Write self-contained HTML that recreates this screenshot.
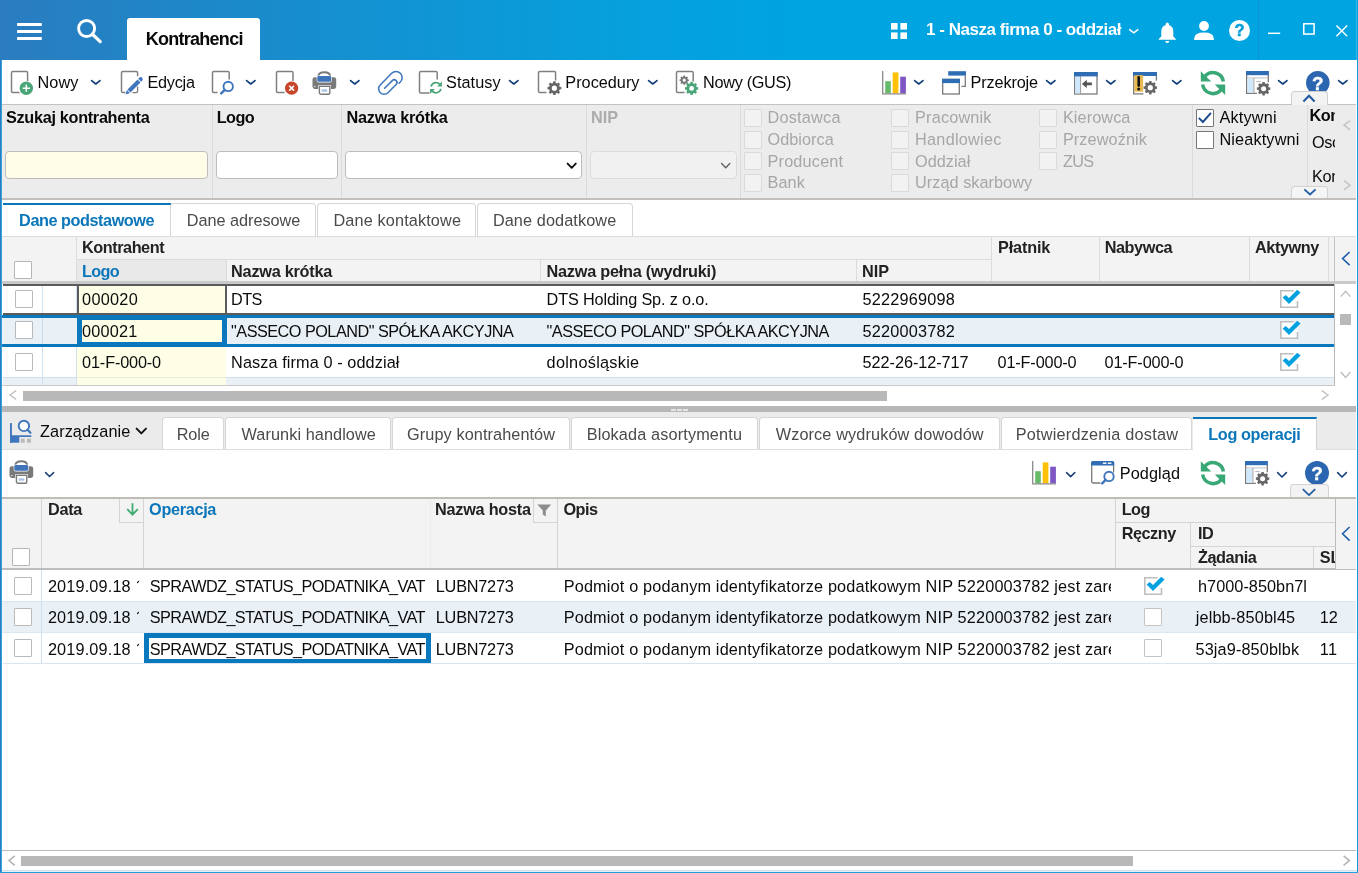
<!DOCTYPE html>
<html lang="pl"><head><meta charset="utf-8"><title>Kontrahenci</title>
<style>
html,body{margin:0;padding:0;}
body{width:1358px;height:873px;overflow:hidden;background:#fff;font-family:"Liberation Sans",sans-serif;position:relative;}
#r{position:absolute;left:0;top:0;width:1358px;height:873px;overflow:hidden;will-change:transform;}
#r div,#r span.t,#r svg{position:absolute;box-sizing:border-box;}
#r span.t{white-space:pre;}
#r svg{overflow:visible;}
</style></head>
<body><div id="r">
<div style="left:0px;top:0px;width:1358px;height:60px;background:linear-gradient(to right,#2a7cbf 0%,#1d88c9 15%,#1194d3 30%,#06a0dd 46%,#00a4e1 58%,#00a4e1 100%);"></div>
<div style="left:1258px;top:0px;width:1px;height:60px;background:#0a93cf;"></div>
<svg style="left:17px;top:22px" width="25" height="19" viewBox="0 0 25 19"><path d="M0.1 2.4 H24.75 M0.1 9.4 H24.75 M0.1 16.4 H24.75" stroke="#fff" stroke-width="3" fill="none"/></svg>
<svg style="left:76px;top:19px" width="27" height="26" viewBox="0 0 27 26"><circle cx="10.6" cy="9.5" r="8" fill="none" stroke="#fff" stroke-width="2.9"/><path d="M16.4 15.3 L24.2 22.6" stroke="#fff" stroke-width="3.3" stroke-linecap="round"/></svg>
<div style="left:127px;top:18px;width:133px;height:42px;background:#fff;border-radius:3px 3px 0 0;"></div>
<span id="t1" class="t" style="left:145.7px;top:29px;font-size:18px;line-height:20px;color:#0a0a0a;font-weight:bold;letter-spacing:-0.729px;">Kontrahenci</span>
<svg style="left:890.5px;top:23px" width="16" height="16" viewBox="0 0 16 16"><rect x="0" y="0" width="6.6" height="6.6" fill="#fff"/><rect x="9.4" y="0" width="6.6" height="6.6" fill="#fff"/><rect x="0" y="9.4" width="6.6" height="6.6" fill="#fff"/><rect x="9.4" y="9.4" width="6.6" height="6.6" fill="#fff"/></svg>
<span id="t2" class="t" style="left:926.1px;top:20px;font-size:17px;line-height:20px;color:#fff;font-weight:bold;letter-spacing:-0.476px;">1 - Nasza firma 0 - oddział</span>
<svg style="left:1126.5px;top:26.5px" width="13.5" height="8.5" viewBox="0 0 13.5 8.5"><path d="M2.6 2.6 L6.75 5.9 L10.9 2.6" fill="none" stroke="#fff" stroke-width="1.4" stroke-linecap="round" stroke-linejoin="round"/></svg>
<svg style="left:1158px;top:22px" width="19" height="22" viewBox="0 0 19 22"><path d="M9.3 0.6 Q10.9 0.6 10.9 2.2 V2.9 Q15.3 4.2 15.3 9.6 V14.4 L17.9 17 V17.8 H0.7 V17 L3.3 14.4 V9.6 Q3.3 4.2 7.7 2.9 V2.2 Q7.7 0.6 9.3 0.6Z" fill="#fff"/><path d="M7.3 19 H11.3 Q11.3 21 9.3 21 Q7.3 21 7.3 19Z" fill="#fff"/></svg>
<svg style="left:1193.5px;top:20.5px" width="20" height="19" viewBox="0 0 20 19"><circle cx="10" cy="5" r="4.9" fill="#fff"/><path d="M0.2 19 V17.4 Q0.6 11.5 10 11.5 Q19.4 11.5 19.8 17.4 V19Z" fill="#fff"/></svg>
<svg style="left:1229px;top:19.8px" width="21" height="21" viewBox="0 0 21 21"><circle cx="10.5" cy="10.5" r="10.5" fill="#fff"/><text x="10.5" y="16.4" text-anchor="middle" style="font:bold 16.5px 'Liberation Sans',sans-serif" fill="#069fdc" stroke="#069fdc" stroke-width="0.5">?</text></svg>
<svg style="left:1268px;top:31.5px" width="13" height="3" viewBox="0 0 13 3"><path d="M0 1.3 H12.2" stroke="#fff" stroke-width="1.5"/></svg>
<svg style="left:1303px;top:22.6px" width="12" height="12" viewBox="0 0 12 12"><rect x="0.75" y="0.75" width="10.3" height="10.3" fill="none" stroke="#fff" stroke-width="1.55"/></svg>
<svg style="left:1336px;top:24.5px" width="12" height="12" viewBox="0 0 12 12"><path d="M0.4 0.4 L11.2 11.2 M11.2 0.4 L0.4 11.2" stroke="#fff" stroke-width="1.4"/></svg>
<div style="left:0px;top:60px;width:1358px;height:44px;background:#fff;"></div>
<div style="left:0px;top:104px;width:1358px;height:1px;background:#c5c2be;"></div>
<svg style="left:10.2px;top:70.2px" width="24" height="26" viewBox="0 0 24 26"><path d="M17.6 11 V2.8 Q17.6 1.5 16.3 1.5 H2.8 Q1.5 1.5 1.5 2.8 V21.3 Q1.5 22.6 2.8 22.6 H9.5" fill="none" stroke="#808080" stroke-width="1.5"/><circle cx="16.3" cy="18.2" r="6.7" fill="#4aa678"/><path d="M16.3 14.6 V21.8 M12.7 18.2 H19.9" stroke="#fff" stroke-width="1.5" fill="none"/></svg>
<span id="t3" class="t" style="left:37.5px;top:72px;font-size:16.25px;line-height:20px;color:#0a0a0a;letter-spacing:0.090px;">Nowy</span>
<svg style="left:89.2px;top:78.3px" width="13.6" height="8.6" viewBox="0 0 13.6 8.6"><path d="M2.6 2.6 L6.8 6.0 L11.0 2.6" fill="none" stroke="#123f79" stroke-width="1.65" stroke-linecap="round" stroke-linejoin="round"/></svg>
<svg style="left:119.9px;top:70.2px" width="26" height="26" viewBox="0 0 26 26"><path d="M17.6 6.2 V2.8 Q17.6 1.5 16.3 1.5 H2.8 Q1.5 1.5 1.5 2.8 V21.3 Q1.5 22.6 2.8 22.6 H5.5" fill="none" stroke="#808080" stroke-width="1.5"/><path d="M17.6 16.5 V21 Q17.6 22.6 16 22.6 H12.5" fill="none" stroke="#7a7a7a" stroke-width="1.3"/><g transform="translate(5.6 24.4) rotate(-45)" fill="#3f76bd"><path d="M0 0 L4 -2.1 V2.1 Z"/><rect x="4.8" y="-2.1" width="14.2" height="4.2"/><path d="M19.9 -2.1 H21.3 A2.1 2.1 0 0 1 21.3 2.1 H19.9 Z"/></g></svg>
<span id="t4" class="t" style="left:147.5px;top:72px;font-size:16.25px;line-height:20px;color:#0a0a0a;letter-spacing:-0.264px;">Edycja</span>
<svg style="left:210.6px;top:70px" width="24" height="26" viewBox="0 0 24 26"><path d="M18.2 9.5 V2.8 Q18.2 1.5 16.9 1.5 H2.8 Q1.5 1.5 1.5 2.8 V21.3 Q1.5 22.6 2.8 22.6 H6.5" fill="none" stroke="#808080" stroke-width="1.5"/><circle cx="17.2" cy="16.4" r="4.7" fill="none" stroke="#3f76bd" stroke-width="1.9"/><path d="M13.8 19.9 L10.2 23.4" stroke="#3f76bd" stroke-width="2.4" stroke-linecap="round"/></svg>
<svg style="left:244.2px;top:78.3px" width="13.6" height="8.6" viewBox="0 0 13.6 8.6"><path d="M2.6 2.6 L6.8 6.0 L11.0 2.6" fill="none" stroke="#123f79" stroke-width="1.65" stroke-linecap="round" stroke-linejoin="round"/></svg>
<svg style="left:274.8px;top:70.2px" width="25" height="26" viewBox="0 0 25 26"><path d="M18.0 11 V2.8 Q18.0 1.5 16.7 1.5 H2.8 Q1.5 1.5 1.5 2.8 V21.3 Q1.5 22.6 2.8 22.6 H9.5" fill="none" stroke="#808080" stroke-width="1.5"/><circle cx="16.6" cy="18.2" r="6.6" fill="#c8452a"/><path d="M14.2 15.8 L19 20.6 M19 15.8 L14.2 20.6" stroke="#fff" stroke-width="1.6" fill="none"/></svg>
<svg style="left:312.3px;top:70.8px" width="25" height="25" viewBox="0 0 25 25"><path d="M6.5 6.4 V5.2 Q6.5 1.3 12.25 1.3 Q18 1.3 18 5.2 V6.4" fill="none" stroke="#797979" stroke-width="2.1"/><rect x="0.5" y="6.3" width="23.7" height="11.6" rx="2.3" fill="#797979"/><rect x="4.7" y="4.5" width="15.1" height="6.9" rx="1.9" fill="#fff"/><rect x="5.3" y="5.1" width="13.9" height="5.7" rx="1.3" fill="#3f74b8"/><rect x="2" y="15.2" width="1.6" height="0.9" fill="#f4f4f4"/><rect x="6.1" y="14.2" width="12.9" height="4" fill="#fff"/><path d="M7.4 15.4 H17.8 V21.4 Q17.8 23.3 15.9 23.3 H9.3 Q7.4 23.3 7.4 21.4Z" fill="#fff" stroke="#797979" stroke-width="1.4"/><rect x="9.7" y="18.3" width="5.6" height="2.4" fill="#a9c4e6"/></svg>
<svg style="left:347.6px;top:78.3px" width="13.6" height="8.6" viewBox="0 0 13.6 8.6"><path d="M2.6 2.6 L6.8 6.0 L11.0 2.6" fill="none" stroke="#123f79" stroke-width="1.65" stroke-linecap="round" stroke-linejoin="round"/></svg>
<svg style="left:377.8px;top:71.1px" width="24" height="24" viewBox="0 0 24 24"><g transform="translate(12 12) rotate(45)"><path d="M6.6 -6.2 V-8 A6.15 6.15 0 0 0 -5.7 -8 L-5.5 8.3 A5.45 5.45 0 0 0 5.4 8.3 V-3.3 A2.75 2.75 0 0 0 -0.1 -3.3 V7.5" fill="none" stroke="#3f76bd" stroke-width="1.55" stroke-linecap="round"/></g></svg>
<svg style="left:417.6px;top:69.8px" width="26" height="26" viewBox="0 0 26 26"><path d="M19.2 9.6 V2.8 Q19.2 1.5 17.9 1.5 H2.8 Q1.5 1.5 1.5 2.8 V21.7 Q1.5 23 2.8 23 H11.6" fill="none" stroke="#808080" stroke-width="1.5"/><g transform="translate(36.0 0) scale(-1 1)"><path d="M13.58 15.15 A5.1 5.1 0 0 1 22.96 16.50" fill="none" stroke="#4aa678" stroke-width="1.7"/><path d="M12.05 11.60 V16.50 H16.95 Z" fill="#4aa678"/><g transform="rotate(180 18.0 17.7)"><path d="M13.58 15.15 A5.1 5.1 0 0 1 22.96 16.50" fill="none" stroke="#4aa678" stroke-width="1.7"/><path d="M12.05 11.60 V16.50 H16.95 Z" fill="#4aa678"/></g></g></svg>
<span id="t5" class="t" style="left:446.0px;top:72px;font-size:16.25px;line-height:20px;color:#0a0a0a;letter-spacing:0.071px;">Statusy</span>
<svg style="left:507px;top:78.3px" width="13.6" height="8.6" viewBox="0 0 13.6 8.6"><path d="M2.6 2.6 L6.8 6.0 L11.0 2.6" fill="none" stroke="#123f79" stroke-width="1.65" stroke-linecap="round" stroke-linejoin="round"/></svg>
<svg style="left:536.6px;top:70px" width="26" height="26" viewBox="0 0 26 26"><path d="M18.6 10.5 V2.8 Q18.6 1.5 17.3 1.5 H2.8 Q1.5 1.5 1.5 2.8 V21.3 Q1.5 22.6 2.8 22.6 H9.5" fill="none" stroke="#808080" stroke-width="1.5"/><path d="M24.31 17.05 L24.31 19.35 L22.62 19.58 L22.07 20.91 L23.10 22.27 L21.47 23.90 L20.11 22.87 L18.78 23.42 L18.55 25.11 L16.25 25.11 L16.02 23.42 L14.69 22.87 L13.33 23.90 L11.70 22.27 L12.73 20.91 L12.18 19.58 L10.49 19.35 L10.49 17.05 L12.18 16.82 L12.73 15.49 L11.70 14.13 L13.33 12.50 L14.69 13.53 L16.02 12.98 L16.25 11.29 L18.55 11.29 L18.78 12.98 L20.11 13.53 L21.47 12.50 L23.10 14.13 L22.07 15.49 L22.62 16.82Z M20.00 18.20 A2.60 2.60 0 1 0 14.80 18.20 A2.60 2.60 0 1 0 20.00 18.20Z" fill="#666" fill-rule="evenodd"/></svg>
<span id="t6" class="t" style="left:565.3px;top:72px;font-size:16.25px;line-height:20px;color:#0a0a0a;letter-spacing:0.015px;">Procedury</span>
<svg style="left:646px;top:78.3px" width="13.6" height="8.6" viewBox="0 0 13.6 8.6"><path d="M2.6 2.6 L6.8 6.0 L11.0 2.6" fill="none" stroke="#123f79" stroke-width="1.65" stroke-linecap="round" stroke-linejoin="round"/></svg>
<svg style="left:674.6px;top:70px" width="26" height="26" viewBox="0 0 26 26"><path d="M18.2 11.5 V2.8 Q18.2 1.5 16.9 1.5 H2.8 Q1.5 1.5 1.5 2.8 V21.3 Q1.5 22.6 2.8 22.6 H9.5" fill="none" stroke="#808080" stroke-width="1.5"/><path d="M13.84 9.43 L13.84 10.97 L12.68 11.12 L12.31 12.01 L13.02 12.93 L11.93 14.02 L11.01 13.31 L10.12 13.68 L9.97 14.84 L8.43 14.84 L8.28 13.68 L7.39 13.31 L6.47 14.02 L5.38 12.93 L6.09 12.01 L5.72 11.12 L4.56 10.97 L4.56 9.43 L5.72 9.28 L6.09 8.39 L5.38 7.47 L6.47 6.38 L7.39 7.09 L8.28 6.72 L8.43 5.56 L9.97 5.56 L10.12 6.72 L11.01 7.09 L11.93 6.38 L13.02 7.47 L12.31 8.39 L12.68 9.28Z M10.80 10.20 A1.60 1.60 0 1 0 7.60 10.20 A1.60 1.60 0 1 0 10.80 10.20Z" fill="#777" fill-rule="evenodd"/><path d="M23.21 17.30 L23.21 19.50 L21.63 19.73 L21.10 21.01 L22.05 22.30 L20.50 23.85 L19.21 22.90 L17.93 23.43 L17.70 25.01 L15.50 25.01 L15.27 23.43 L13.99 22.90 L12.70 23.85 L11.15 22.30 L12.10 21.01 L11.57 19.73 L9.99 19.50 L9.99 17.30 L11.57 17.07 L12.10 15.79 L11.15 14.50 L12.70 12.95 L13.99 13.90 L15.27 13.37 L15.50 11.79 L17.70 11.79 L17.93 13.37 L19.21 13.90 L20.50 12.95 L22.05 14.50 L21.10 15.79 L21.63 17.07Z M19.00 18.40 A2.40 2.40 0 1 0 14.20 18.40 A2.40 2.40 0 1 0 19.00 18.40Z" fill="#4aa678" fill-rule="evenodd"/></svg>
<span id="t7" class="t" style="left:703.1px;top:72px;font-size:16.25px;line-height:20px;color:#0a0a0a;letter-spacing:-0.319px;">Nowy (GUS)</span>
<svg style="left:881.8px;top:71.2px" width="24" height="24" viewBox="0 0 24 24"><rect x="3.2" y="10.2" width="5.6" height="12.2" fill="#66bb6a"/><rect x="10.7" y="1.4" width="5.7" height="21" fill="#ffc107"/><rect x="18.2" y="5.7" width="5.7" height="16.7" fill="#7e57c2"/><path d="M0.7 0 V22.9 H24" fill="none" stroke="#8a8a8a" stroke-width="1.3"/></svg>
<svg style="left:912.2px;top:78.3px" width="13.6" height="8.6" viewBox="0 0 13.6 8.6"><path d="M2.6 2.6 L6.8 6.0 L11.0 2.6" fill="none" stroke="#123f79" stroke-width="1.65" stroke-linecap="round" stroke-linejoin="round"/></svg>
<svg style="left:942px;top:71.2px" width="24" height="24" viewBox="0 0 24 24"><rect x="6.2" y="0.2" width="17.8" height="4.4" fill="#2f6db5"/><path d="M23.3 4.6 V15.4 H19.4" fill="none" stroke="#7a7a7a" stroke-width="1.3"/><rect x="0.7" y="8.4" width="16.6" height="14.6" fill="#fff" stroke="#7a7a7a" stroke-width="1.3"/><rect x="0" y="7.8" width="18" height="4.3" fill="#2f6db5"/></svg>
<span id="t8" class="t" style="left:970.6px;top:72px;font-size:16.25px;line-height:20px;color:#0a0a0a;letter-spacing:-0.149px;">Przekroje</span>
<svg style="left:1044.2px;top:78.3px" width="13.6" height="8.6" viewBox="0 0 13.6 8.6"><path d="M2.6 2.6 L6.8 6.0 L11.0 2.6" fill="none" stroke="#123f79" stroke-width="1.65" stroke-linecap="round" stroke-linejoin="round"/></svg>
<svg style="left:1074px;top:72px" width="24" height="23" viewBox="0 0 24 23"><rect x="0.7" y="0.7" width="22.3" height="21.3" fill="#fff" stroke="#7a7a7a" stroke-width="1.3"/><rect x="1.3" y="4" width="4.7" height="17.4" fill="#cfe8fb"/><path d="M6.6 4 V21.6" stroke="#9a9a9a" stroke-width="1"/><rect x="0" y="0" width="23.7" height="4.4" fill="#2f6db5"/><path d="M7.9 11.9 L12.8 7.8 V10.5 H17.9 V13.3 H12.8 V16 Z" fill="#555"/></svg>
<svg style="left:1104.2px;top:78.3px" width="13.6" height="8.6" viewBox="0 0 13.6 8.6"><path d="M2.6 2.6 L6.8 6.0 L11.0 2.6" fill="none" stroke="#123f79" stroke-width="1.65" stroke-linecap="round" stroke-linejoin="round"/></svg>
<svg style="left:1132.6px;top:72px" width="25" height="23" viewBox="0 0 25 23"><path d="M0.7 4 V21.9 H10.5" fill="none" stroke="#7a7a7a" stroke-width="1.3"/><path d="M23.4 4 V8.6" fill="none" stroke="#7a7a7a" stroke-width="1.3"/><rect x="0" y="0" width="24" height="4" fill="#2f6db5"/><rect x="1.3" y="3.2" width="8.8" height="16.5" fill="#e8b84e"/><path d="M5.7 5.3 V13.6" stroke="#111" stroke-width="2.6" stroke-linecap="round"/><circle cx="5.7" cy="17" r="1.5" fill="#111"/><path d="M24.01 14.58 L24.01 16.82 L22.42 17.06 L21.88 18.36 L22.83 19.65 L21.25 21.23 L19.96 20.28 L18.66 20.82 L18.42 22.41 L16.18 22.41 L15.94 20.82 L14.64 20.28 L13.35 21.23 L11.77 19.65 L12.72 18.36 L12.18 17.06 L10.59 16.82 L10.59 14.58 L12.18 14.34 L12.72 13.04 L11.77 11.75 L13.35 10.17 L14.64 11.12 L15.94 10.58 L16.18 8.99 L18.42 8.99 L18.66 10.58 L19.96 11.12 L21.25 10.17 L22.83 11.75 L21.88 13.04 L22.42 14.34Z M19.90 15.70 A2.60 2.60 0 1 0 14.70 15.70 A2.60 2.60 0 1 0 19.90 15.70Z" fill="#666" fill-rule="evenodd"/></svg>
<svg style="left:1170px;top:78.3px" width="13.6" height="8.6" viewBox="0 0 13.6 8.6"><path d="M2.6 2.6 L6.8 6.0 L11.0 2.6" fill="none" stroke="#123f79" stroke-width="1.65" stroke-linecap="round" stroke-linejoin="round"/></svg>
<svg style="left:1200px;top:70px" width="26" height="26" viewBox="0 0 26 26"><path d="M4.88 6.52 A10.45 10.45 0 0 1 23.34 11.60" fill="none" stroke="#3aa876" stroke-width="3.5"/><path d="M0.80 1.20 V11.60 H11.20 Z" fill="#3aa876"/><g transform="rotate(180 13.0 13.1)"><path d="M4.88 6.52 A10.45 10.45 0 0 1 23.34 11.60" fill="none" stroke="#3aa876" stroke-width="3.5"/><path d="M0.80 1.20 V11.60 H11.20 Z" fill="#3aa876"/></g></svg>
<svg style="left:1246px;top:71px" width="25" height="25" viewBox="0 0 25 25"><path d="M0.65 4 V22.4 H10.9" fill="none" stroke="#7a7a7a" stroke-width="1.3"/><path d="M22.3 4 V11.2" fill="none" stroke="#7a7a7a" stroke-width="1.3"/><path d="M1.2 6.9 H21.6" stroke="#c4c4c4" stroke-width="1.1"/><rect x="1.5" y="8" width="5.6" height="13.6" fill="#cfe8fb"/><path d="M7.9 6.9 V22.4" stroke="#a9a9a9" stroke-width="1.1"/><path d="M10.3 10.6 H14.7" stroke="#b0b0b0" stroke-width="1"/><rect x="0" y="0" width="22.9" height="4.2" fill="#2f6db5"/><path d="M24.31 16.58 L24.31 18.82 L22.72 19.06 L22.18 20.36 L23.13 21.65 L21.55 23.23 L20.26 22.28 L18.96 22.82 L18.72 24.41 L16.48 24.41 L16.24 22.82 L14.94 22.28 L13.65 23.23 L12.07 21.65 L13.02 20.36 L12.48 19.06 L10.89 18.82 L10.89 16.58 L12.48 16.34 L13.02 15.04 L12.07 13.75 L13.65 12.17 L14.94 13.12 L16.24 12.58 L16.48 10.99 L18.72 10.99 L18.96 12.58 L20.26 13.12 L21.55 12.17 L23.13 13.75 L22.18 15.04 L22.72 16.34Z M20.10 17.70 A2.50 2.50 0 1 0 15.10 17.70 A2.50 2.50 0 1 0 20.10 17.70Z" fill="#666" fill-rule="evenodd"/></svg>
<svg style="left:1276px;top:78.3px" width="13.6" height="8.6" viewBox="0 0 13.6 8.6"><path d="M2.6 2.6 L6.8 6.0 L11.0 2.6" fill="none" stroke="#123f79" stroke-width="1.65" stroke-linecap="round" stroke-linejoin="round"/></svg>
<svg style="left:1306px;top:70.8px" width="23.6" height="23.6" viewBox="0 0 23.6 23.6"><circle cx="11.8" cy="11.8" r="11.8" fill="#2c66b0"/><text x="11.8" y="19.0" text-anchor="middle" style="font:bold 19px 'Liberation Sans',sans-serif" fill="#fff" stroke="#fff" stroke-width="0.4">?</text></svg>
<svg style="left:1336px;top:78.3px" width="13.6" height="8.6" viewBox="0 0 13.6 8.6"><path d="M2.6 2.6 L6.8 6.0 L11.0 2.6" fill="none" stroke="#123f79" stroke-width="1.65" stroke-linecap="round" stroke-linejoin="round"/></svg>
<div style="left:0px;top:105px;width:1358px;height:93px;background:#ececec;"></div>
<div style="left:0px;top:198px;width:1358px;height:2px;background:#c2bfbc;"></div>
<div style="left:212px;top:105px;width:1px;height:93px;background:#dbdbdb;"></div>
<div style="left:341px;top:105px;width:1px;height:93px;background:#dbdbdb;"></div>
<div style="left:586px;top:105px;width:1px;height:93px;background:#dbdbdb;"></div>
<div style="left:740px;top:105px;width:1px;height:93px;background:#dbdbdb;"></div>
<div style="left:1192px;top:105px;width:1px;height:93px;background:#dbdbdb;"></div>
<div style="left:1307px;top:105px;width:1px;height:93px;background:#dbdbdb;"></div>
<span id="t9" class="t" style="left:6.0px;top:107px;font-size:16.25px;line-height:20px;color:#0a0a0a;font-weight:bold;letter-spacing:-0.311px;">Szukaj kontrahenta</span>
<span id="t10" class="t" style="left:216.7px;top:107px;font-size:16.25px;line-height:20px;color:#0a0a0a;font-weight:bold;letter-spacing:-0.580px;">Logo</span>
<span id="t11" class="t" style="left:346.5px;top:107px;font-size:16.25px;line-height:20px;color:#0a0a0a;font-weight:bold;letter-spacing:-0.240px;">Nazwa krótka</span>
<span id="t12" class="t" style="left:591.1px;top:107px;font-size:16.25px;line-height:20px;color:#ababab;font-weight:bold;letter-spacing:-0.031px;">NIP</span>
<div style="left:5px;top:151px;width:203.4px;height:28px;background:#fffde8;border:1px solid #bdbdbd;border-radius:4px;"></div>
<div style="left:216px;top:151px;width:121.6px;height:28px;background:#fff;border:1px solid #bdbdbd;border-radius:4px;"></div>
<div style="left:345.4px;top:151px;width:237px;height:28px;background:#fff;border:1px solid #bdbdbd;border-radius:4px;"></div>
<svg style="left:565px;top:160.6px" width="13.4" height="9.4" viewBox="0 0 13.4 9.4"><path d="M2.6 2.6 L6.7 6.800000000000001 L10.8 2.6" fill="none" stroke="#111" stroke-width="1.9" stroke-linecap="round" stroke-linejoin="round"/></svg>
<div style="left:590px;top:151px;width:146.6px;height:28px;background:#f1f1f1;border:1px solid #dcdcdc;border-radius:4px;"></div>
<svg style="left:719px;top:160.6px" width="13.4" height="9.4" viewBox="0 0 13.4 9.4"><path d="M2.6 2.6 L6.7 6.800000000000001 L10.8 2.6" fill="none" stroke="#666" stroke-width="1.5" stroke-linecap="round" stroke-linejoin="round"/></svg>
<div style="left:744.2px;top:109.2px;width:17.6px;height:17.6px;border:1.2px solid #dadada;background:#f2f2f2;border-radius:1px"></div>
<span id="t13" class="t" style="left:767.5px;top:107px;font-size:16.25px;line-height:20px;color:#a6a6a6;letter-spacing:0.230px;">Dostawca</span>
<div style="left:744.2px;top:131.1px;width:17.6px;height:17.6px;border:1.2px solid #dadada;background:#f2f2f2;border-radius:1px"></div>
<span id="t14" class="t" style="left:767.5px;top:129px;font-size:16.25px;line-height:20px;color:#a6a6a6;letter-spacing:0.045px;">Odbiorca</span>
<div style="left:744.2px;top:152.2px;width:17.6px;height:17.6px;border:1.2px solid #dadada;background:#f2f2f2;border-radius:1px"></div>
<span id="t15" class="t" style="left:767.5px;top:151px;font-size:16.25px;line-height:20px;color:#a6a6a6;letter-spacing:0.191px;">Producent</span>
<div style="left:744.2px;top:174.1px;width:17.6px;height:17.6px;border:1.2px solid #dadada;background:#f2f2f2;border-radius:1px"></div>
<span id="t16" class="t" style="left:767.5px;top:172px;font-size:16.25px;line-height:20px;color:#a6a6a6;letter-spacing:0.088px;">Bank</span>
<div style="left:891.2px;top:109.2px;width:17.6px;height:17.6px;border:1.2px solid #dadada;background:#f2f2f2;border-radius:1px"></div>
<span id="t17" class="t" style="left:915.1px;top:107px;font-size:16.25px;line-height:20px;color:#a6a6a6;letter-spacing:0.181px;">Pracownik</span>
<div style="left:891.2px;top:131.1px;width:17.6px;height:17.6px;border:1.2px solid #dadada;background:#f2f2f2;border-radius:1px"></div>
<span id="t18" class="t" style="left:915.1px;top:129px;font-size:16.25px;line-height:20px;color:#a6a6a6;letter-spacing:0.248px;">Handlowiec</span>
<div style="left:891.2px;top:152.2px;width:17.6px;height:17.6px;border:1.2px solid #dadada;background:#f2f2f2;border-radius:1px"></div>
<span id="t19" class="t" style="left:915.1px;top:151px;font-size:16.25px;line-height:20px;color:#a6a6a6;letter-spacing:0.013px;">Oddział</span>
<div style="left:891.2px;top:174.1px;width:17.6px;height:17.6px;border:1.2px solid #dadada;background:#f2f2f2;border-radius:1px"></div>
<span id="t20" class="t" style="left:915.1px;top:172px;font-size:16.25px;line-height:20px;color:#a6a6a6;letter-spacing:0.036px;">Urząd skarbowy</span>
<div style="left:1039px;top:109.2px;width:17.6px;height:17.6px;border:1.2px solid #dadada;background:#f2f2f2;border-radius:1px"></div>
<span id="t21" class="t" style="left:1062.9px;top:107px;font-size:16.25px;line-height:20px;color:#a6a6a6;letter-spacing:0.095px;">Kierowca</span>
<div style="left:1039px;top:131.1px;width:17.6px;height:17.6px;border:1.2px solid #dadada;background:#f2f2f2;border-radius:1px"></div>
<span id="t22" class="t" style="left:1062.9px;top:129px;font-size:16.25px;line-height:20px;color:#a6a6a6;letter-spacing:0.101px;">Przewoźnik</span>
<div style="left:1039px;top:152.2px;width:17.6px;height:17.6px;border:1.2px solid #dadada;background:#f2f2f2;border-radius:1px"></div>
<span id="t23" class="t" style="left:1062.9px;top:151px;font-size:16.25px;line-height:20px;color:#a6a6a6;letter-spacing:-0.667px;">ZUS</span>
<div style="left:1196px;top:109.2px;width:17.6px;height:17.6px;border:1.3px solid #777;background:#fff;border-radius:1px"></div>
<svg style="left:1196px;top:109.2px" width="18" height="18" viewBox="0 0 18 18"><path d="M2.8 8.8 L6.9 13 L15 3.8" fill="none" stroke="#1a4a8a" stroke-width="1.9"/></svg>
<div style="left:1196px;top:131.1px;width:17.6px;height:17.6px;border:1.3px solid #777;background:#fff;border-radius:1px"></div>
<span id="t24" class="t" style="left:1219.4px;top:107px;font-size:16.25px;line-height:20px;color:#0a0a0a;letter-spacing:0.214px;">Aktywni</span>
<span id="t25" class="t" style="left:1219.4px;top:129px;font-size:16.25px;line-height:20px;color:#0a0a0a;letter-spacing:0.152px;">Nieaktywni</span>
<div style="left:1307.4px;top:105px;width:28.1px;height:20px;overflow:hidden;"><span id="t26" class="t" style="left:2px;top:0;font-size:16.25px;line-height:20px;color:#0a0a0a;font-weight:bold;letter-spacing:-0.450px;">Kontrahent</span></div>
<div style="left:1309.9px;top:132px;width:25.6px;height:20px;overflow:hidden;"><span id="t27" class="t" style="left:2px;top:0;font-size:16.25px;line-height:20px;color:#0a0a0a;letter-spacing:-0.300px;">Osoba</span></div>
<div style="left:1309.9px;top:166px;width:25.6px;height:20px;overflow:hidden;"><span id="t28" class="t" style="left:2px;top:0;font-size:16.25px;line-height:20px;color:#0a0a0a;letter-spacing:-0.300px;">Kontakt</span></div>
<svg style="left:1343.2px;top:119.5px" width="8" height="11" viewBox="0 0 8 11"><path d="M7 0.6 L1 5.2 L7 9.8" fill="none" stroke="#c4c4c4" stroke-width="1.5"/></svg>
<svg style="left:1343.2px;top:179.5px" width="8" height="11" viewBox="0 0 8 11"><path d="M1 0.6 L7 5.2 L1 9.8" fill="none" stroke="#c4c4c4" stroke-width="1.5"/></svg>
<div style="left:1291px;top:90.6px;width:36.6px;height:14.4px;background:#f3f3f3;border:1px solid #cfcfcf;border-bottom:none;border-radius:4px 4px 0 0;"></div>
<svg style="left:1302.4px;top:94px" width="14" height="9" viewBox="0 0 14 9"><path d="M1.4 7.4 L7 1.8 L12.6 7.4" fill="none" stroke="#1f5a9e" stroke-width="2.1"/></svg>
<div style="left:1291px;top:185.5px;width:36.6px;height:12.6px;background:#f5f5f5;border:1px solid #d2d2d2;border-bottom:none;border-radius:4px 4px 0 0;"></div>
<svg style="left:1302.5px;top:188.4px" width="14" height="8" viewBox="0 0 14 8"><path d="M1.4 1.4 L7 6.4 L12.6 1.4" fill="none" stroke="#1f5fa8" stroke-width="1.9"/></svg>
<div style="left:0px;top:200px;width:1358px;height:37px;background:#fff;"></div>
<div style="left:0px;top:236px;width:1358px;height:1px;background:#dcdcdc;"></div>
<div style="left:3px;top:203px;width:168px;height:33px;background:#fff;border-top:2px solid #0b76ba;"></div>
<span id="t29" class="t" style="left:19.1px;top:210px;font-size:16.25px;line-height:20px;color:#0b76ba;font-weight:bold;letter-spacing:-0.451px;">Dane podstawowe</span>
<div style="left:170px;top:203px;width:146px;height:33px;background:#fff;border:1px solid #d6d6d6;border-bottom:none;border-radius:4px 4px 0 0;"></div>
<span id="t30" class="t" style="left:186.7px;top:210px;font-size:16.25px;line-height:20px;color:#4a4a4a;letter-spacing:-0.018px;">Dane adresowe</span>
<div style="left:317px;top:203px;width:159px;height:33px;background:#fff;border:1px solid #d6d6d6;border-bottom:none;border-radius:4px 4px 0 0;"></div>
<span id="t31" class="t" style="left:333.5px;top:210px;font-size:16.25px;line-height:20px;color:#4a4a4a;letter-spacing:0.135px;">Dane kontaktowe</span>
<div style="left:477px;top:203px;width:156px;height:33px;background:#fff;border:1px solid #d6d6d6;border-bottom:none;border-radius:4px 4px 0 0;"></div>
<span id="t32" class="t" style="left:492.9px;top:210px;font-size:16.25px;line-height:20px;color:#4a4a4a;letter-spacing:0.102px;">Dane dodatkowe</span>
<div style="left:0px;top:237px;width:1358px;height:44px;background:#f3f3f3;"></div>
<div style="left:76px;top:259px;width:915px;height:1px;background:#dcdcdc;"></div>
<div style="left:77px;top:260px;width:149px;height:21px;background:#e9e9e9;"></div>
<div style="left:76px;top:237px;width:1px;height:44px;background:#dcdcdc;"></div>
<div style="left:226px;top:260px;width:1px;height:21px;background:#dcdcdc;"></div>
<div style="left:540px;top:260px;width:1px;height:21px;background:#dcdcdc;"></div>
<div style="left:856px;top:260px;width:1px;height:21px;background:#dcdcdc;"></div>
<div style="left:991px;top:237px;width:1px;height:44px;background:#dcdcdc;"></div>
<div style="left:1099px;top:237px;width:1px;height:44px;background:#dcdcdc;"></div>
<div style="left:1249px;top:237px;width:1px;height:44px;background:#dcdcdc;"></div>
<div style="left:1328px;top:237px;width:1px;height:44px;background:#dcdcdc;"></div>
<span id="t33" class="t" style="left:82.1px;top:237px;font-size:16.25px;line-height:20px;color:#222;font-weight:bold;letter-spacing:-0.467px;">Kontrahent</span>
<span id="t34" class="t" style="left:82.1px;top:261px;font-size:16.25px;line-height:20px;color:#0b76ba;font-weight:bold;letter-spacing:-0.680px;">Logo</span>
<span id="t35" class="t" style="left:231.1px;top:261px;font-size:16.25px;line-height:20px;color:#222;font-weight:bold;letter-spacing:-0.240px;">Nazwa krótka</span>
<span id="t36" class="t" style="left:546.5px;top:261px;font-size:16.25px;line-height:20px;color:#222;font-weight:bold;letter-spacing:-0.223px;">Nazwa pełna (wydruki)</span>
<span id="t37" class="t" style="left:862.1px;top:261px;font-size:16.25px;line-height:20px;color:#222;font-weight:bold;letter-spacing:-0.031px;">NIP</span>
<span id="t38" class="t" style="left:998.1px;top:237px;font-size:16.25px;line-height:20px;color:#222;font-weight:bold;letter-spacing:-0.183px;">Płatnik</span>
<span id="t39" class="t" style="left:1104.7px;top:237px;font-size:16.25px;line-height:20px;color:#222;font-weight:bold;letter-spacing:-0.436px;">Nabywca</span>
<span id="t40" class="t" style="left:1255.0px;top:237px;font-size:16.25px;line-height:20px;color:#222;font-weight:bold;letter-spacing:-0.418px;">Aktywny</span>
<div style="left:14px;top:261.2px;width:17.6px;height:17.6px;border:1.2px solid #b5b5b5;background:#fff;border-radius:1px"></div>
<div style="left:1334px;top:237px;width:22px;height:44px;background:#f3f3f3;border-left:1px solid #c4c4c4;"></div>
<svg style="left:1340.6px;top:251px" width="10" height="15" viewBox="0 0 10 15"><path d="M8.6 1 L1.6 7.6 L8.6 14.2" fill="none" stroke="#1f5fa8" stroke-width="1.6"/></svg>
<div style="left:0px;top:281px;width:1356px;height:2.6px;background:#c9c9c9;"></div>
<div style="left:0px;top:283.6px;width:1334px;height:101.4px;background:#fff;"></div>
<div style="left:3px;top:377px;width:1331px;height:1px;background:#d3e0ec;"></div>
<div style="left:3px;top:378px;width:1331px;height:7px;background:#eaf1f6;"></div>
<div style="left:77px;top:285px;width:149px;height:100px;background:#fefee6;"></div>
<div style="left:77px;top:377px;width:149px;height:1px;background:#e6ebd9;"></div>
<div style="left:42px;top:285px;width:1px;height:100px;background:#cfe0f0;"></div>
<div style="left:76px;top:285px;width:1px;height:100px;background:#cfe0f0;"></div>
<div style="left:3px;top:284px;width:1331px;height:1.6px;background:#5c5c5c;"></div>
<div style="left:3px;top:313px;width:1331px;height:1.8px;background:#5c5c5c;"></div>
<div style="left:77px;top:284px;width:150px;height:30.8px;border:2px solid #5c5c5c;background:#fefee6;"></div>
<div style="left:2px;top:314.8px;width:1332px;height:32.2px;background:#e9f1f6;border-top:3.2px solid #0a78bc;border-bottom:3px solid #0a78bc;"></div>
<div style="left:42px;top:318px;width:1px;height:26px;background:#c9dcee;"></div>
<div style="left:76.8px;top:314.8px;width:150px;height:32.2px;background:#fefee6;border:5.2px solid #0a78bc;"></div>
<span id="t41" class="t" style="left:82.1px;top:289px;font-size:16.25px;line-height:20px;color:#0c0c0c;letter-spacing:0.278px;">000020</span>
<span id="t42" class="t" style="left:231.1px;top:289px;font-size:16.25px;line-height:20px;color:#0c0c0c;letter-spacing:-0.667px;">DTS</span>
<span id="t43" class="t" style="left:546.6px;top:289px;font-size:16.25px;line-height:20px;color:#0c0c0c;letter-spacing:-0.150px;">DTS Holding Sp. z o.o.</span>
<span id="t44" class="t" style="left:862.6px;top:289px;font-size:16.25px;line-height:20px;color:#0c0c0c;letter-spacing:0.212px;">5222969098</span>
<div style="left:15.2px;top:290.2px;width:17.6px;height:17.6px;border:1.2px solid #b9b9b9;background:#fff;border-radius:1px"></div>
<svg style="left:1280.3999999999999px;top:289.9px" width="21" height="19" viewBox="0 0 21 19"><path d="M13.7 0.8 H0.8 V17.2 H17.5 V10.9" fill="#fff" stroke="#bebebe" stroke-width="1.6"/><path d="M2.6 7.6 L5.8 5 L9 8.1 L17.2 -0.3 L20.6 2.6 L9 14.1 Z" fill="#04a1e0"/></svg>
<span id="t45" class="t" style="left:82.1px;top:321px;font-size:16.25px;line-height:20px;color:#0c0c0c;letter-spacing:0.194px;">000021</span>
<span id="t46" class="t" style="left:231.1px;top:321px;font-size:16.25px;line-height:20px;color:#0c0c0c;letter-spacing:-0.521px;">"ASSECO POLAND" SPÓŁKA AKCYJNA</span>
<span id="t47" class="t" style="left:546.6px;top:321px;font-size:16.25px;line-height:20px;color:#0c0c0c;letter-spacing:-0.521px;">"ASSECO POLAND" SPÓŁKA AKCYJNA</span>
<span id="t48" class="t" style="left:862.6px;top:321px;font-size:16.25px;line-height:20px;color:#0c0c0c;letter-spacing:0.212px;">5220003782</span>
<div style="left:15.2px;top:321.2px;width:17.6px;height:17.6px;border:1.2px solid #b9b9b9;background:#fff;border-radius:1px"></div>
<svg style="left:1280.3999999999999px;top:320.9px" width="21" height="19" viewBox="0 0 21 19"><path d="M13.7 0.8 H0.8 V17.2 H17.5 V10.9" fill="#fff" stroke="#bebebe" stroke-width="1.6"/><path d="M2.6 7.6 L5.8 5 L9 8.1 L17.2 -0.3 L20.6 2.6 L9 14.1 Z" fill="#04a1e0"/></svg>
<span id="t49" class="t" style="left:82.1px;top:352px;font-size:16.25px;line-height:20px;color:#0c0c0c;letter-spacing:-0.149px;">01-F-000-0</span>
<span id="t50" class="t" style="left:231.1px;top:352px;font-size:16.25px;line-height:20px;color:#0c0c0c;letter-spacing:0.096px;">Nasza firma 0 - oddział</span>
<span id="t51" class="t" style="left:546.6px;top:352px;font-size:16.25px;line-height:20px;color:#0c0c0c;letter-spacing:0.280px;">dolnośląskie</span>
<span id="t52" class="t" style="left:862.6px;top:352px;font-size:16.25px;line-height:20px;color:#0c0c0c;letter-spacing:-0.047px;">522-26-12-717</span>
<div style="left:15.2px;top:353.2px;width:17.6px;height:17.6px;border:1.2px solid #b9b9b9;background:#fff;border-radius:1px"></div>
<svg style="left:1280.3999999999999px;top:352.9px" width="21" height="19" viewBox="0 0 21 19"><path d="M13.7 0.8 H0.8 V17.2 H17.5 V10.9" fill="#fff" stroke="#bebebe" stroke-width="1.6"/><path d="M2.6 7.6 L5.8 5 L9 8.1 L17.2 -0.3 L20.6 2.6 L9 14.1 Z" fill="#04a1e0"/></svg>
<span id="t53" class="t" style="left:997.5px;top:352px;font-size:16.25px;line-height:20px;color:#0c0c0c;letter-spacing:-0.139px;">01-F-000-0</span>
<span id="t54" class="t" style="left:1104.5px;top:352px;font-size:16.25px;line-height:20px;color:#0c0c0c;letter-spacing:-0.139px;">01-F-000-0</span>
<div style="left:1334px;top:283.6px;width:22px;height:101.4px;background:#fff;border-left:1.2px solid #b9b9b9;"></div>
<svg style="left:1340px;top:290px" width="12" height="8" viewBox="0 0 12 8"><path d="M0.8 6.6 L5.6 1.4 L10.4 6.6" fill="none" stroke="#bdbdbd" stroke-width="1.4"/></svg>
<div style="left:1340.2px;top:313.6px;width:10.8px;height:11.4px;background:#b9b9b9;"></div>
<svg style="left:1340px;top:371.4px" width="12" height="8" viewBox="0 0 12 8"><path d="M0.8 1 L5.6 6.4 L10.4 1" fill="none" stroke="#bdbdbd" stroke-width="1.4"/></svg>
<div style="left:0px;top:385px;width:1335px;height:1px;background:#c9c9c9;"></div>
<div style="left:0px;top:386px;width:1358px;height:20px;background:#fff;"></div>
<svg style="left:9px;top:390px" width="8" height="11" viewBox="0 0 8 11"><path d="M7.2 0.6 L1 5 L7.2 9.4" fill="none" stroke="#c0c0c0" stroke-width="1.3"/></svg>
<div style="left:23.2px;top:391px;width:864px;height:9.6px;background:#b8b8b8;"></div>
<svg style="left:1321px;top:390px" width="8" height="11" viewBox="0 0 8 11"><path d="M0.8 0.6 L7 5 L0.8 9.4" fill="none" stroke="#c0c0c0" stroke-width="1.3"/></svg>
<div style="left:0px;top:406px;width:1356px;height:6px;background:#b7b7b7;"></div>
<div style="left:671px;top:409px;width:5px;height:2px;background:#e6e6e6;"></div>
<div style="left:677px;top:409px;width:5px;height:2px;background:#e6e6e6;"></div>
<div style="left:683px;top:409px;width:5px;height:2px;background:#e6e6e6;"></div>
<div style="left:0px;top:412px;width:1358px;height:37px;background:#ebebeb;"></div>
<div style="left:0px;top:449px;width:1358px;height:1px;background:#dedede;"></div>
<svg style="left:10.3px;top:420.2px" width="23" height="24" viewBox="0 0 23 24"><rect x="0" y="3.1" width="1.9" height="19.6" fill="#3f76bd"/><rect x="0" y="15.3" width="21.3" height="1.7" fill="#3f76bd"/><rect x="0" y="16.8" width="9.3" height="5.9" fill="#3f76bd"/><rect x="10.8" y="18.6" width="3.9" height="4.1" fill="#b9b9b9"/><rect x="17" y="18.6" width="3.9" height="4.1" fill="#b9b9b9"/><circle cx="13.9" cy="5.9" r="5.2" fill="#fff" stroke="#3f76bd" stroke-width="1.9"/><path d="M17.6 9.8 L20.4 12.7" stroke="#3f76bd" stroke-width="2.3" stroke-linecap="round"/></svg>
<span id="t55" class="t" style="left:40.0px;top:421px;font-size:16.25px;line-height:20px;color:#0a0a0a;letter-spacing:0.088px;">Zarządzanie</span>
<svg style="left:134.4px;top:425.6px" width="14.6" height="10" viewBox="0 0 14.6 10"><path d="M2.6 2.6 L7.3 7.4 L12.0 2.6" fill="none" stroke="#111" stroke-width="1.9" stroke-linecap="round" stroke-linejoin="round"/></svg>
<div style="left:162px;top:417px;width:62px;height:32px;background:#fff;border:1px solid #d6d6d6;border-bottom:none;border-radius:4px 4px 0 0;"></div>
<span id="t56" class="t" style="left:176.7px;top:424px;font-size:16.25px;line-height:20px;color:#4a4a4a;letter-spacing:-0.105px;">Role</span>
<div style="left:225px;top:417px;width:166px;height:32px;background:#fff;border:1px solid #d6d6d6;border-bottom:none;border-radius:4px 4px 0 0;"></div>
<span id="t57" class="t" style="left:241.5px;top:424px;font-size:16.25px;line-height:20px;color:#4a4a4a;letter-spacing:0.082px;">Warunki handlowe</span>
<div style="left:392px;top:417px;width:178px;height:32px;background:#fff;border:1px solid #d6d6d6;border-bottom:none;border-radius:4px 4px 0 0;"></div>
<span id="t58" class="t" style="left:407.1px;top:424px;font-size:16.25px;line-height:20px;color:#4a4a4a;letter-spacing:0.092px;">Grupy kontrahentów</span>
<div style="left:571px;top:417px;width:187px;height:32px;background:#fff;border:1px solid #d6d6d6;border-bottom:none;border-radius:4px 4px 0 0;"></div>
<span id="t59" class="t" style="left:586.7px;top:424px;font-size:16.25px;line-height:20px;color:#4a4a4a;letter-spacing:0.144px;">Blokada asortymentu</span>
<div style="left:759px;top:417px;width:241px;height:32px;background:#fff;border:1px solid #d6d6d6;border-bottom:none;border-radius:4px 4px 0 0;"></div>
<span id="t60" class="t" style="left:775.7px;top:424px;font-size:16.25px;line-height:20px;color:#4a4a4a;letter-spacing:0.130px;">Wzorce wydruków dowodów</span>
<div style="left:1001px;top:417px;width:191px;height:32px;background:#fff;border:1px solid #d6d6d6;border-bottom:none;border-radius:4px 4px 0 0;"></div>
<span id="t61" class="t" style="left:1015.7px;top:424px;font-size:16.25px;line-height:20px;color:#4a4a4a;letter-spacing:0.216px;">Potwierdzenia dostaw</span>
<div style="left:1193px;top:417px;width:124px;height:34px;background:#fff;border-top:2px solid #0b76ba;border-right:1px solid #d0d0d0;"></div>
<span id="t62" class="t" style="left:1208.3px;top:424px;font-size:16.25px;line-height:20px;color:#0b76ba;font-weight:bold;letter-spacing:-0.385px;">Log operacji</span>
<div style="left:0px;top:450px;width:1358px;height:47px;background:#fff;"></div>
<svg style="left:8.6px;top:459.8px" width="25" height="25" viewBox="0 0 25 25"><path d="M6.5 6.4 V5.2 Q6.5 1.3 12.25 1.3 Q18 1.3 18 5.2 V6.4" fill="none" stroke="#797979" stroke-width="2.1"/><rect x="0.5" y="6.3" width="23.7" height="11.6" rx="2.3" fill="#797979"/><rect x="4.7" y="4.5" width="15.1" height="6.9" rx="1.9" fill="#fff"/><rect x="5.3" y="5.1" width="13.9" height="5.7" rx="1.3" fill="#3f74b8"/><rect x="2" y="15.2" width="1.6" height="0.9" fill="#f4f4f4"/><rect x="6.1" y="14.2" width="12.9" height="4" fill="#fff"/><path d="M7.4 15.4 H17.8 V21.4 Q17.8 23.3 15.9 23.3 H9.3 Q7.4 23.3 7.4 21.4Z" fill="#fff" stroke="#797979" stroke-width="1.4"/><rect x="9.7" y="18.3" width="5.6" height="2.4" fill="#a9c4e6"/></svg>
<svg style="left:43.2px;top:469.6px" width="13.2" height="9.2" viewBox="0 0 13.2 9.2"><path d="M2.6 2.6 L6.6 6.6000000000000005 L10.6 2.6" fill="none" stroke="#1c3f7a" stroke-width="1.5" stroke-linecap="round" stroke-linejoin="round"/></svg>
<svg style="left:1031.8px;top:461px" width="24" height="24" viewBox="0 0 24 24"><rect x="3.2" y="10.2" width="5.6" height="12.2" fill="#66bb6a"/><rect x="10.7" y="1.4" width="5.7" height="21" fill="#ffc107"/><rect x="18.2" y="5.7" width="5.7" height="16.7" fill="#7e57c2"/><path d="M0.7 0 V22.9 H24" fill="none" stroke="#8a8a8a" stroke-width="1.3"/></svg>
<svg style="left:1063.6px;top:469.6px" width="13.4" height="9.2" viewBox="0 0 13.4 9.2"><path d="M2.6 2.6 L6.7 6.6000000000000005 L10.8 2.6" fill="none" stroke="#1c3f7a" stroke-width="1.5" stroke-linecap="round" stroke-linejoin="round"/></svg>
<svg style="left:1090.6px;top:461px" width="24" height="24" viewBox="0 0 24 24"><path d="M22.6 4 V11.5 M0.7 4 V20.6 Q0.7 22 2.1 22 H9.5" fill="none" stroke="#7a7a7a" stroke-width="1.3"/><path d="M0 4.4 V1.6 Q0 0 1.6 0 H21.7 Q23.3 0 23.3 1.6 V4.4Z" fill="#2f6db5"/><rect x="11.8" y="1.5" width="3.6" height="1.4" fill="#fff"/><rect x="16.8" y="1.5" width="3.6" height="1.4" fill="#fff"/><circle cx="18" cy="15.4" r="4.7" fill="#fff" stroke="#3f76bd" stroke-width="1.9"/><path d="M14.6 18.9 L11.2 22.4" stroke="#3f76bd" stroke-width="2.4" stroke-linecap="round"/></svg>
<span id="t63" class="t" style="left:1119.7px;top:463px;font-size:16.25px;line-height:20px;color:#0a0a0a;letter-spacing:0.108px;">Podgląd</span>
<svg style="left:1199.6px;top:460px" width="26" height="26" viewBox="0 0 26 26"><path d="M4.88 6.52 A10.45 10.45 0 0 1 23.34 11.60" fill="none" stroke="#3aa876" stroke-width="3.5"/><path d="M0.80 1.20 V11.60 H11.20 Z" fill="#3aa876"/><g transform="rotate(180 13.0 13.1)"><path d="M4.88 6.52 A10.45 10.45 0 0 1 23.34 11.60" fill="none" stroke="#3aa876" stroke-width="3.5"/><path d="M0.80 1.20 V11.60 H11.20 Z" fill="#3aa876"/></g></svg>
<svg style="left:1245px;top:461px" width="25" height="25" viewBox="0 0 25 25"><path d="M0.65 4 V22.4 H10.9" fill="none" stroke="#7a7a7a" stroke-width="1.3"/><path d="M22.3 4 V11.2" fill="none" stroke="#7a7a7a" stroke-width="1.3"/><path d="M1.2 6.9 H21.6" stroke="#c4c4c4" stroke-width="1.1"/><rect x="1.5" y="8" width="5.6" height="13.6" fill="#cfe8fb"/><path d="M7.9 6.9 V22.4" stroke="#a9a9a9" stroke-width="1.1"/><path d="M10.3 10.6 H14.7" stroke="#b0b0b0" stroke-width="1"/><rect x="0" y="0" width="22.9" height="4.2" fill="#2f6db5"/><path d="M24.31 16.58 L24.31 18.82 L22.72 19.06 L22.18 20.36 L23.13 21.65 L21.55 23.23 L20.26 22.28 L18.96 22.82 L18.72 24.41 L16.48 24.41 L16.24 22.82 L14.94 22.28 L13.65 23.23 L12.07 21.65 L13.02 20.36 L12.48 19.06 L10.89 18.82 L10.89 16.58 L12.48 16.34 L13.02 15.04 L12.07 13.75 L13.65 12.17 L14.94 13.12 L16.24 12.58 L16.48 10.99 L18.72 10.99 L18.96 12.58 L20.26 13.12 L21.55 12.17 L23.13 13.75 L22.18 15.04 L22.72 16.34Z M20.10 17.70 A2.50 2.50 0 1 0 15.10 17.70 A2.50 2.50 0 1 0 20.10 17.70Z" fill="#666" fill-rule="evenodd"/></svg>
<svg style="left:1275.3px;top:469.8px" width="14" height="9.6" viewBox="0 0 14 9.6"><path d="M2.6 2.6 L7.0 7.0 L11.4 2.6" fill="none" stroke="#123f79" stroke-width="1.5" stroke-linecap="round" stroke-linejoin="round"/></svg>
<svg style="left:1305.1px;top:461px" width="24" height="24" viewBox="0 0 24 24"><circle cx="12" cy="12" r="12" fill="#2c66b0"/><text x="12" y="19.2" text-anchor="middle" style="font:bold 19px 'Liberation Sans',sans-serif" fill="#fff" stroke="#fff" stroke-width="0.4">?</text></svg>
<svg style="left:1335px;top:469.8px" width="14" height="9.6" viewBox="0 0 14 9.6"><path d="M2.6 2.6 L7.0 7.0 L11.4 2.6" fill="none" stroke="#123f79" stroke-width="1.5" stroke-linecap="round" stroke-linejoin="round"/></svg>
<div style="left:1290.2px;top:484.2px;width:38.6px;height:13px;background:#f3f3f3;border:1px solid #d2d2d2;border-bottom:none;border-radius:4px 4px 0 0;"></div>
<svg style="left:1302px;top:487.6px" width="15" height="9" viewBox="0 0 15 9"><path d="M0.8 1.2 L7 7 L13.2 1.2" fill="none" stroke="#1f5a9e" stroke-width="1.7"/></svg>
<div style="left:0px;top:497px;width:1356px;height:2px;background:#c0bdb9;"></div>
<div style="left:0px;top:499px;width:1358px;height:69px;background:#f3f3f3;"></div>
<div style="left:0px;top:568px;width:1335px;height:2px;background:#bdbdbd;"></div>
<div style="left:41px;top:499px;width:1px;height:69px;background:#d4d4d4;"></div>
<div style="left:143px;top:499px;width:1px;height:69px;background:#d4d4d4;"></div>
<div style="left:557px;top:499px;width:1px;height:69px;background:#d4d4d4;"></div>
<div style="left:1115px;top:499px;width:1px;height:69px;background:#d4d4d4;"></div>
<div style="left:429.6px;top:499px;width:1px;height:69px;background:#ececec;"></div>
<div style="left:119px;top:499px;width:24.4px;height:24px;border-left:1px solid #d4d4d4;border-bottom:1px solid #d4d4d4;"></div>
<svg style="left:125.6px;top:503px" width="13" height="13" viewBox="0 0 13 13"><path d="M6.5 0.2 V11.4 M1.2 6.2 L6.5 11.6 L11.8 6.2" fill="none" stroke="#3fab73" stroke-width="1.8"/></svg>
<div style="left:533px;top:499px;width:24.4px;height:24px;border-left:1px solid #d4d4d4;border-bottom:1px solid #d4d4d4;"></div>
<svg style="left:537.4px;top:504px" width="15" height="13" viewBox="0 0 15 13"><path d="M0.4 0.4 H14.2 L8.8 6.4 V12.4 L5.8 10.6 V6.4 Z" fill="#8c8c8c"/></svg>
<span id="t64" class="t" style="left:48.1px;top:499px;font-size:16.25px;line-height:20px;color:#222;font-weight:bold;letter-spacing:-0.309px;">Data</span>
<span id="t65" class="t" style="left:149.1px;top:499px;font-size:16.25px;line-height:20px;color:#0b76ba;font-weight:bold;letter-spacing:-0.320px;">Operacja</span>
<span id="t66" class="t" style="left:435.1px;top:499px;font-size:16.25px;line-height:20px;color:#222;font-weight:bold;letter-spacing:-0.258px;">Nazwa hosta</span>
<span id="t67" class="t" style="left:563.5px;top:499px;font-size:16.25px;line-height:20px;color:#222;font-weight:bold;letter-spacing:-0.531px;">Opis</span>
<span id="t68" class="t" style="left:1121.7px;top:499px;font-size:16.25px;line-height:20px;color:#222;font-weight:bold;letter-spacing:-0.527px;">Log</span>
<div style="left:1115px;top:522px;width:220px;height:1px;background:#d4d4d4;"></div>
<div style="left:1190px;top:522px;width:1px;height:46px;background:#d4d4d4;"></div>
<div style="left:1190px;top:546px;width:145px;height:1px;background:#d4d4d4;"></div>
<div style="left:1313px;top:546px;width:1px;height:22px;background:#d4d4d4;"></div>
<span id="t69" class="t" style="left:1121.7px;top:523px;font-size:16.25px;line-height:20px;color:#222;font-weight:bold;letter-spacing:-0.484px;">Ręczny</span>
<span id="t70" class="t" style="left:1198.0px;top:523px;font-size:16.25px;line-height:20px;color:#222;font-weight:bold;letter-spacing:-0.625px;">ID</span>
<span id="t71" class="t" style="left:1198.0px;top:547px;font-size:16.25px;line-height:20px;color:#222;font-weight:bold;letter-spacing:-0.429px;">Żądania</span>
<div style="left:1317.7px;top:547px;width:17.3px;height:20px;overflow:hidden;"><span id="t72" class="t" style="left:2px;top:0;font-size:16.25px;line-height:20px;color:#222;font-weight:bold;">SL</span></div>
<div style="left:12.2px;top:548.2px;width:17.6px;height:17.6px;border:1.2px solid #b5b5b5;background:#fff;border-radius:1px"></div>
<div style="left:1335px;top:499px;width:21px;height:71.6px;background:#f3f3f3;border-left:1.2px solid #bdbdbd;border-bottom:2px solid #bdbdbd;"></div>
<svg style="left:1341.4px;top:526px" width="10" height="16" viewBox="0 0 10 16"><path d="M8.6 1 L1.6 7.8 L8.6 14.6" fill="none" stroke="#1f5fa8" stroke-width="1.6"/></svg>
<div style="left:0px;top:570px;width:1356px;height:31px;background:#fff;"></div>
<div style="left:0px;top:601px;width:1356px;height:32px;background:#eaf1f6;"></div>
<div style="left:0px;top:633px;width:1356px;height:30px;background:#fff;"></div>
<div style="left:3px;top:600.6px;width:1353px;height:1px;background:#dde7ef;"></div>
<div style="left:3px;top:632.4px;width:1353px;height:1px;background:#dde7ef;"></div>
<div style="left:3px;top:663px;width:1353px;height:1px;background:#dae5ee;"></div>
<div style="left:41px;top:570px;width:1px;height:93px;background:#cfe0f0;"></div>
<div style="left:14.1px;top:577.1px;width:17.6px;height:17.6px;border:1.2px solid #b9b9b9;background:#fff;border-radius:1px"></div>
<div style="left:45.9px;top:576px;width:93.1px;height:20px;overflow:hidden;clip-path:polygon(0 0,100% 0,100% 50%,calc(100% - 5px) 50%,calc(100% - 5px) 100%,0 100%);"><span id="t73" class="t" style="left:2px;top:0;font-size:16.25px;line-height:20px;color:#0c0c0c;letter-spacing:0.156px;">2019.09.18 11:42</span></div>
<span id="t74" class="t" style="left:149.8px;top:576px;font-size:16.25px;line-height:20px;color:#0c0c0c;letter-spacing:-0.580px;">SPRAWDZ_STATUS_PODATNIKA_VAT</span>
<span id="t75" class="t" style="left:435.8px;top:576px;font-size:16.25px;line-height:20px;color:#0c0c0c;letter-spacing:-0.213px;">LUBN7273</span>
<div style="left:561.7px;top:576px;width:548.9px;height:20px;overflow:hidden;"><span id="t76" class="t" style="left:2px;top:0;font-size:16.25px;line-height:20px;color:#0c0c0c;letter-spacing:0.173px;">Podmiot o podanym identyfikatorze podatkowym NIP 5220003782 jest zarejestrowany</span></div>
<span id="t77" class="t" style="left:1198.0px;top:576px;font-size:16.25px;line-height:20px;color:#0c0c0c;letter-spacing:0.043px;">h7000-850bn7l</span>
<svg style="left:1144.2px;top:576.8000000000001px" width="21" height="19" viewBox="0 0 21 19"><path d="M13.7 0.8 H0.8 V17.2 H17.5 V10.9" fill="#fff" stroke="#bebebe" stroke-width="1.6"/><path d="M2.6 7.6 L5.8 5 L9 8.1 L17.2 -0.3 L20.6 2.6 L9 14.1 Z" fill="#04a1e0"/></svg>
<div style="left:14.1px;top:608.2px;width:17.6px;height:17.6px;border:1.2px solid #b9b9b9;background:#fff;border-radius:1px"></div>
<div style="left:45.9px;top:607px;width:93.1px;height:20px;overflow:hidden;clip-path:polygon(0 0,100% 0,100% 50%,calc(100% - 5px) 50%,calc(100% - 5px) 100%,0 100%);"><span id="t78" class="t" style="left:2px;top:0;font-size:16.25px;line-height:20px;color:#0c0c0c;letter-spacing:0.156px;">2019.09.18 11:42</span></div>
<span id="t79" class="t" style="left:149.8px;top:607px;font-size:16.25px;line-height:20px;color:#0c0c0c;letter-spacing:-0.580px;">SPRAWDZ_STATUS_PODATNIKA_VAT</span>
<span id="t80" class="t" style="left:435.8px;top:607px;font-size:16.25px;line-height:20px;color:#0c0c0c;letter-spacing:-0.213px;">LUBN7273</span>
<div style="left:561.7px;top:607px;width:548.9px;height:20px;overflow:hidden;"><span id="t81" class="t" style="left:2px;top:0;font-size:16.25px;line-height:20px;color:#0c0c0c;letter-spacing:0.173px;">Podmiot o podanym identyfikatorze podatkowym NIP 5220003782 jest zarejestrowany</span></div>
<span id="t82" class="t" style="left:1195.7px;top:607px;font-size:16.25px;line-height:20px;color:#0c0c0c;letter-spacing:0.154px;">jelbb-850bl45</span>
<span id="t83" class="t" style="left:1319.7px;top:607px;font-size:16.25px;line-height:20px;color:#0c0c0c;letter-spacing:-0.039px;">12</span>
<div style="left:1144.4px;top:608.2px;width:18px;height:18px;border:1.2px solid #c4c4c4;background:#fff;border-radius:1px"></div>
<div style="left:14.1px;top:639.4px;width:17.6px;height:17.6px;border:1.2px solid #b9b9b9;background:#fff;border-radius:1px"></div>
<div style="left:45.9px;top:639px;width:93.1px;height:20px;overflow:hidden;clip-path:polygon(0 0,100% 0,100% 50%,calc(100% - 5px) 50%,calc(100% - 5px) 100%,0 100%);"><span id="t84" class="t" style="left:2px;top:0;font-size:16.25px;line-height:20px;color:#0c0c0c;letter-spacing:0.156px;">2019.09.18 11:42</span></div>
<span id="t85" class="t" style="left:149.8px;top:639px;font-size:16.25px;line-height:20px;color:#0c0c0c;letter-spacing:-0.580px;">SPRAWDZ_STATUS_PODATNIKA_VAT</span>
<span id="t86" class="t" style="left:435.8px;top:639px;font-size:16.25px;line-height:20px;color:#0c0c0c;letter-spacing:-0.213px;">LUBN7273</span>
<div style="left:561.7px;top:639px;width:548.9px;height:20px;overflow:hidden;"><span id="t87" class="t" style="left:2px;top:0;font-size:16.25px;line-height:20px;color:#0c0c0c;letter-spacing:0.173px;">Podmiot o podanym identyfikatorze podatkowym NIP 5220003782 jest zarejestrowany</span></div>
<span id="t88" class="t" style="left:1195.5px;top:639px;font-size:16.25px;line-height:20px;color:#0c0c0c;letter-spacing:0.130px;">53ja9-850blbk</span>
<span id="t89" class="t" style="left:1319.7px;top:639px;font-size:16.25px;line-height:20px;color:#0c0c0c;letter-spacing:0.562px;">11</span>
<div style="left:1144.4px;top:639.4px;width:18px;height:18px;border:1.2px solid #c4c4c4;background:#fff;border-radius:1px"></div>
<div style="left:144px;top:633px;width:287px;height:30px;border:5px solid #0a78bc;border-bottom-width:4px;"></div>
<div style="left:0px;top:850px;width:1356px;height:1px;background:#b9b9b9;"></div>
<div style="left:0px;top:851px;width:1358px;height:19px;background:#fff;"></div>
<svg style="left:8px;top:855px" width="8" height="12" viewBox="0 0 8 12"><path d="M6.8 0.8 L1 5.6 L6.8 10.4" fill="none" stroke="#b5b5b5" stroke-width="1.6"/></svg>
<div style="left:21.2px;top:856.2px;width:1112px;height:9.4px;background:#b8b8b8;"></div>
<svg style="left:1343px;top:855px" width="8" height="12" viewBox="0 0 8 12"><path d="M0.6 0.8 L6.4 5.6 L0.6 10.4" fill="none" stroke="#b5b5b5" stroke-width="1.6"/></svg>
<div style="left:0px;top:60px;width:1px;height:813px;background:#2a7dc0;"></div>
<div style="left:1px;top:60px;width:1px;height:813px;background:#38a2dc;"></div>
<div style="left:1356px;top:60px;width:1px;height:813px;background:#fff;"></div>
<div style="left:1357px;top:60px;width:1px;height:813px;background:#0f9fdc;"></div>
<div style="left:1356px;top:0px;width:1px;height:60px;background:#3ab4e8;"></div>
<div style="left:2px;top:870px;width:1355px;height:1px;background:#c4e6f6;"></div>
<div style="left:2px;top:871px;width:1355px;height:1px;background:#eeecee;"></div>
<div style="left:0px;top:872px;width:1358px;height:1px;background:#1ea0dc;"></div>
</div></body></html>
